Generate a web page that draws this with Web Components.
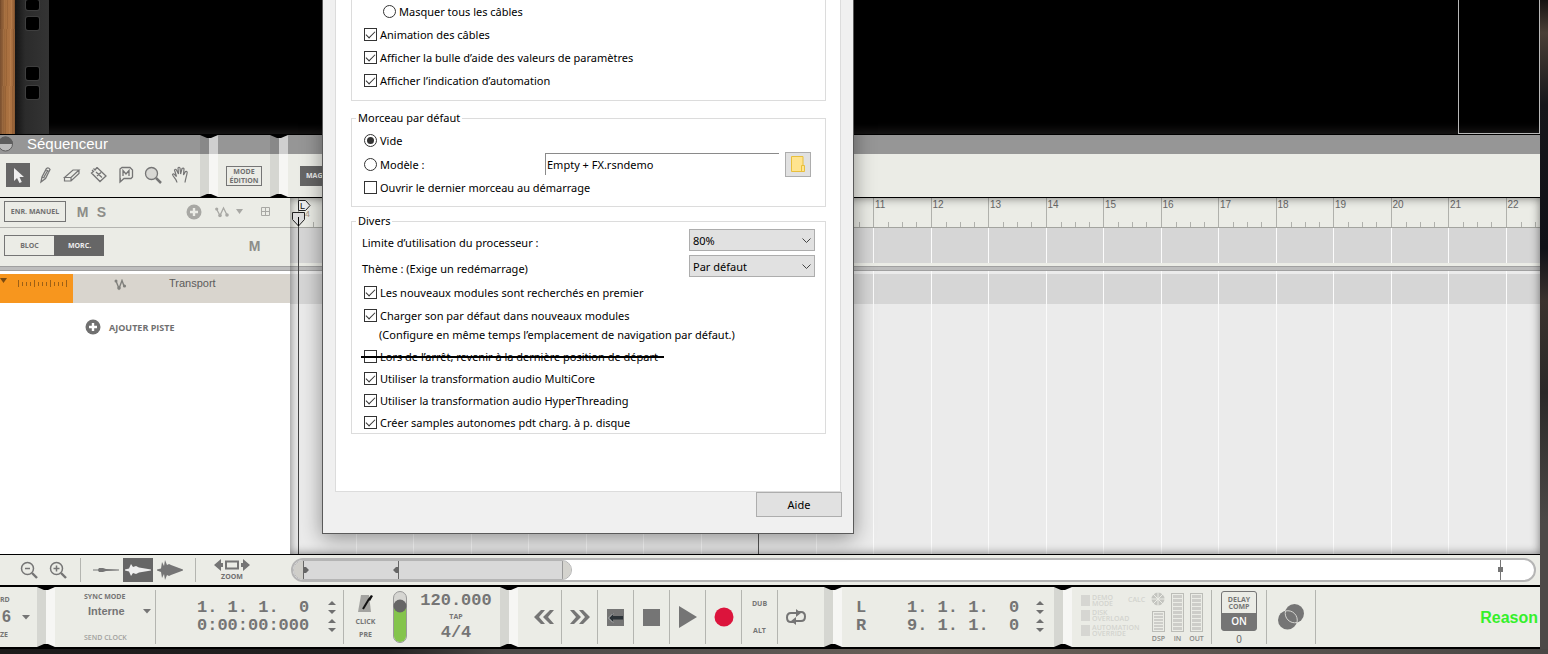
<!DOCTYPE html>
<html lang="fr">
<head>
<meta charset="utf-8">
<title>Séquenceur</title>
<style>
html,body{margin:0;height:100%}
body{font-family:"Liberation Sans",Arial,sans-serif;overflow:hidden;
background:linear-gradient(180deg,#151412 0,#4a3f36 5%,#16161a 16%,#101117 38%,#3b322e 46%,#2b2928 60%,#4c4947 80%,#4c4947 100%)}
</style>
</head>
<body>
<studio-app></studio-app>
<script>
function define(name, html, setup){
  const t=document.createElement('template');
  t.innerHTML='<style>*{box-sizing:border-box}button{font:inherit;color:inherit;background:none;border:0;padding:0;margin:0}svg{display:block}</style>'+html;
  customElements.define(name,class extends HTMLElement{
    constructor(){super();this.attachShadow({mode:'open'});}
    connectedCallback(){
      if(this.ready)return;this.ready=true;
      this.shadowRoot.append(t.content.cloneNode(true));
      if(setup)setup(this,this.shadowRoot);
    }
  });
}

/* ---------- rack ---------- */
define('rack-view',`
<style>
:host{display:flex;flex:0 0 134px;background:#000;box-shadow:inset 0 -10px 8px -6px #1a1818;overflow:hidden}
.wood{width:15px;background:
 repeating-linear-gradient(91deg,rgba(70,30,5,.14) 0 1px,transparent 1px 4px,rgba(255,200,140,.1) 4px 5px,transparent 5px 7px),
 linear-gradient(90deg,#7a5030,#a8703f 40%,#ad7343 75%,#8a5a33)}
.rail{width:34px;background:linear-gradient(90deg,#141414,#2b2b2b 30%,#343434);padding:0 0 0 11px;display:flex;flex-direction:column}
i{display:block;width:13px;height:13px;background:#000;border-radius:2px;box-shadow:0 0 0 1px #3e3e3e;margin-bottom:6px;flex:none}
i:first-child{height:10px}
i:nth-child(1){margin-bottom:7px}
i:nth-child(2){margin-bottom:37px}
.room{flex:1}
.map{width:82px;border:1px solid #b8b8b8;border-top:0;height:134px}
</style>
<div class="wood"></div><div class="rail"><i></i><i></i><i></i><i></i></div><div class="room"></div><div class="map"></div>`);

/* ---------- fold between panels ---------- */
define('panel-fold',`
<style>
:host{display:flex;flex:0 0 18px;position:relative}
.d{flex:1;background:rgba(0,0,0,.09)}.l{flex:1;background:rgba(255,255,255,.55)}
svg{position:absolute;left:0;width:18px;height:4px}.t{top:0}.b{bottom:0}
</style>
<div class="d"></div><div class="l"></div>
<svg class="t" viewBox="0 0 18 4"><path d="M0 0H18L11 3H7Z"/></svg>
<svg class="b" viewBox="0 0 18 4"><path d="M0 4H18L11 1H7Z"/></svg>`);

/* ---------- sequencer header ---------- */
define('sequencer-header',`
<style>
:host{display:flex;flex:0 0 64px;border-top:1px solid #000;border-bottom:1px solid #000;background:linear-gradient(#969696 19px,#ebece6 19px);color:#707070;overflow:hidden}
.main{width:200px}
.title{height:19px;display:flex;align-items:center;color:#fff;font-size:15px;gap:14px;padding-bottom:2px}
.title svg{flex:none}
.tools{display:flex;gap:3px;padding:9px 0 0 6px}
.tools button{width:24px;height:24px;display:grid;place-items:center}
.tools .on{background:#666}
.seg{padding-top:19px;display:flex;justify-content:center;align-items:center}
.mode{width:52px}
.mode button{font:bold 7px/9px "Open Sans",sans-serif;border:1px solid #757575;width:36px;height:20px}
.rest{flex:1;justify-content:flex-start;padding-left:12px}
.rest button{background:#666;color:#eee;font:bold 7px "Open Sans",sans-serif;height:20px;width:34px;padding-left:6px;text-align:left}
</style>
<div class="main">
 <div class="title"><svg width="13" height="16" viewBox="0 0 13 16"><circle cx="5.500" cy="8" r="7" fill="#bdbdbd" stroke="#5e5e5e"/><path d="M-2 8a7 7 0 0 1 15 0z" fill="#5e5e5e"/></svg><span>Séquenceur</span></div>
 <div class="tools">
  <button class="on" aria-label="Sélection"><svg width="24" height="24"><path d="M8 5v13l3-3 2.500 5 2.300-1-2.300-5H18z" fill="#eee"/></svg></button>
  <button aria-label="Crayon"><svg width="24" height="24" fill="none" stroke="#757575" stroke-width="1.300"><path d="M8 19l1-5L13.500 5.500q2-1.500 3.500 1L12.500 15.500zM9 14l3.500 1.500M12.500 7.500l3.500 1.500M11 14l4-7"/></svg></button>
  <button aria-label="Gomme"><svg width="24" height="24" fill="none" stroke="#757575" stroke-width="1.200"><path d="M4.500 14.500L13 7h6L11 14.500zM4.500 14.500V18H11L19 10.500V7M11 14.500V18"/></svg></button>
  <button aria-label="Rasoir"><svg width="24" height="24" fill="none" stroke="#757575" stroke-width="1.300"><path d="M10 4.500L19 13l-6 5.500L4.500 10l2-1.500L5 7M10 4.500L8 7 6.500 5.500M9 9l6 5.500M10 13l4-3.500"/></svg></button>
  <button aria-label="Muet"><svg width="24" height="24" fill="none" stroke="#757575" stroke-width="1.300"><path d="M7 16H6V6L8 4.500h8L18.500 7v7L17 15.500H10L6 19V15M9 13V7.500L12 11l3-3.500V13"/></svg></button>
  <button aria-label="Loupe"><svg width="24" height="24" fill="none" stroke="#757575"><circle cx="10.500" cy="10.500" r="6" fill="#d8d8d4" stroke-width="1.300"/><path d="M15 15l5 5" stroke-width="2.500"/></svg></button>
  <button aria-label="Main"><svg width="24" height="24" fill="none" stroke="#757575" stroke-width="1.200"><path d="M9 19.500C8.500 16 5 14 4.500 11.500q1-1.500 2.500.5l1.500 1.500L6.500 7q1-1.500 2 0L10.500 11 10 5q1-1.500 2 0l.6 6L14 5.500q1.300-1 2 .3L15.500 12l2-3.500q1.500-.5 1.700 1C18.500 13.500 17.500 16 17 19.500"/></svg></button>
 </div>
</div>
<panel-fold></panel-fold>
<div class="seg mode"><button>MODE ÉDITION</button></div>
<panel-fold></panel-fold>
<div class="seg rest"><button>MAG</button></div>`);

/* ---------- track list ---------- */
define('track-list',`
<style>
:host{display:flex;flex-direction:column;width:290px;flex:none;background:#fff;color:#8d8d89;font-family:"Open Sans",sans-serif}
.row{display:flex;align-items:center;background:#ebece6}
.top{height:30px;border-bottom:1px solid #b4b4b0;padding:0 0 2px 4px}
.box{border:1px solid #757575;color:#707070;font-size:7px;font-weight:700;height:21px;width:62px}
.ms{font:bold 14px "Liberation Sans",sans-serif;width:19px;text-align:center}
.rec{margin-right:7px}
.icons{display:flex;align-items:center;margin-left:auto;padding-right:19px}
.icons svg:nth-child(2){margin-left:13px}.icons svg:nth-child(3){margin:0 18px 0 7px}
.second{height:38px;padding:0 0 3px 4px}
.second .box{width:50px;border-right:0}.second .sel{background:#666;border-color:#666;color:#eee}
.second .ms{margin-left:auto;margin-right:26px}
.gap{height:5px;background:#bdbdbd;border-top:1px solid #a0a0a0;border-bottom:1px solid #a0a0a0;margin-bottom:3px;flex:none}
.track{height:29px;background:#d9d5ce;color:#5c5c5c;font:11px "Liberation Sans",sans-serif;align-items:flex-start}
.clip{width:73px;height:29px;background:#f7961e}
.track .node{margin:5px 0 0 41px}.track span{margin:3px 0 0 42px}
.add{display:flex;align-items:center;gap:8px;margin:16px 0 0 85px;color:#707070;font-size:9px;font-weight:700;height:16px}
</style>
<div class="row top"><button class="box rec">ENR. MANUEL</button><button class="ms">M</button><button class="ms">S</button>
 <div class="icons">
 <svg width="16" height="16"><circle cx="8" cy="8" r="7.500" fill="#a8a8a4"/><path d="M8 4v8M4 8h8" stroke="#ebece6" stroke-width="2.400"/></svg>
 <svg width="14" height="12" fill="none" stroke="#a8a8a4" stroke-width="1.300"><path d="M1.500 3L5 9.500 8.500 2 12 9"/><g fill="#a8a8a4" stroke="none"><circle cx="1.700" cy="3" r="1.600"/><circle cx="5" cy="9.500" r="1.800"/><circle cx="12" cy="9" r="1.800"/></g></svg>
 <svg width="7" height="6"><path d="M0 0h7L3.500 5z" fill="#a8a8a4"/></svg>
 <svg width="10" height="10" fill="none" stroke="#a8a8a4"><path d="M.5.5h8v8h-8zM4.500 0v9M0 4.500h9"/></svg>
 </div></div>
<div class="row second"><button class="box">BLOC</button><button class="box sel">MORC.</button><button class="ms">M</button></div>
<div class="gap"></div>
<div class="row track"><svg class="clip" viewBox="0 0 73 29"><path d="M0 4h7L3.500 9z" fill="#7a4a10"/><path d="M18.500 6v7M34.500 6v7M50.500 6v7M66.500 6v7M22.500 8v4M26.500 8v4M30.500 8v4M38.500 8v4M42.500 8v4M46.500 8v4M54.500 8v4M58.500 8v4M62.500 8v4" stroke="#9d6016"/></svg>
 <svg class="node" width="13" height="12" fill="none" stroke="#80807c" stroke-width="1.400"><path d="M2 2L5 9.500 8 1.500 10 7"/><g fill="#80807c" stroke="none"><circle cx="2" cy="2" r="1.500"/><circle cx="5" cy="9" r="1.800"/><circle cx="10.500" cy="7" r="1.600"/></g></svg><span>Transport</span></div>
<button class="add"><svg width="16" height="16"><circle cx="8" cy="8" r="7.500" fill="#707070"/><path d="M8 4v8M4 8h8" stroke="#fff" stroke-width="2.400"/></svg>AJOUTER PISTE</button>`);

/* ---------- bars of the time line; 21.6 bars fit the width ---------- */
define('bar-grid',`
<style>
:host{display:grid;grid-template-columns:repeat(22,calc(100% / 21.6));padding-left:8px;overflow:hidden;flex:none}
div{border-left:1px solid #fbfbfb}
:host([ruler]) div{border-color:#b0b1ac;display:grid;grid-template-columns:repeat(4,1fr);grid-template-rows:1fr 5px;font:10px/13px "Liberation Sans",sans-serif;color:#696969}
span{grid-column:1/-1;padding-left:1px}
i{border-left:1px solid #b0b1ac}i.f{border:0}
</style>`,(el,root)=>{
  const from=+el.getAttribute('first')||0;
  for(let n=1;n<=22;n++){
    const d=document.createElement('div');
    if(el.hasAttribute('ruler'))d.innerHTML='<span>'+(n>=from?n:'')+'</span><i class="f"></i><i></i><i></i><i></i>';
    root.append(d);
  }
});

define('time-line',`
<style>
:host{display:flex;flex-direction:column;flex:1;min-width:0;position:relative;background:#ebebeb;overflow:hidden}
.r{height:30px;background:#ebece6;border-bottom:1px solid #a3a49f}
.a{height:35px;background:#d6d6d6}
.s{height:3px;background:#ebece6}
.gap{height:5px;flex:none;background:#bdbdbd;border-top:1px solid #a0a0a0;border-bottom:1px solid #a0a0a0}
.b{height:3px}.c{height:30px;background:#d6d6d6}.d{flex:1}
.shade{position:absolute;inset:0;box-shadow:inset 0 0 10px rgba(0,0,0,.5)}
.end{position:absolute;left:468px;top:30px;bottom:0;border-left:1px solid #555}
.head{position:absolute;left:8px;top:14px;bottom:0;border-left:1px solid #444}
.mark{position:absolute;left:0;top:0}
</style>
<bar-grid class="r" ruler first="11"></bar-grid>
<bar-grid class="a"></bar-grid><div class="s"></div><div class="gap"></div>
<bar-grid class="b"></bar-grid><bar-grid class="c"></bar-grid><bar-grid class="d"></bar-grid>
<div class="end"></div><div class="head"></div><div class="shade"></div>
<svg class="mark" width="32" height="32" font-family="Liberation Sans" ><text x="15" y="19" font-size="9" fill="#a89888">4</text><path d="M8.500 2.500h7l4.500 5-4.500 5h-7z" fill="#eee" stroke="#222"/><text x="10" y="11" font-size="9" fill="#111">L</text><path d="M2.500 14.500h12v7L8.500 28l-6-6.500z" fill="#dcdcdc" stroke="#222"/><path d="M8.500 19v9" stroke="#000"/></svg>`);

/* ---------- zoom and scroll strip ---------- */
define('zoom-strip',`
<style>
:host{display:flex;flex:0 0 31px;align-items:center;border-top:1px solid #000;background:#ebece6;color:#707070}
.l{width:291px;display:flex;align-items:center;flex:none;height:24px}
button{display:grid;place-items:center;height:24px}
.z{width:29px}.z:first-child{margin-left:14px}
.v{width:30px;margin-right:2px}.on{background:#666}
hr{border:0;width:1px;height:24px;background:#b4b5b0;margin:0 10px 0 8px}
.v+hr{margin:0 18px 0 8px}
.zoom{width:36px;font:bold 7px/8px "Open Sans",sans-serif;align-content:center;gap:2px}
.bar{flex:1;margin-right:4px;height:24px;border:2px solid #b5b5b5;border-radius:12px;background:#fff;display:flex;overflow:hidden}
.thumb{width:279px;height:20px;background:#d9d9d9;border:1px solid #b5b5b5;border-radius:10px;overflow:hidden}
.sp{flex:1}.end{margin-right:30px}
</style>
<div class="l">
<button class="z" aria-label="Zoom arrière"><svg width="18" height="18" fill="none" stroke="#757575" stroke-width="1.500"><circle cx="7.500" cy="7.500" r="6"/><path d="M5 7.500h5"/><path d="M12 12l5 5" stroke-width="2.400"/></svg></button>
<button class="z" aria-label="Zoom avant"><svg width="18" height="18" fill="none" stroke="#757575" stroke-width="1.500"><circle cx="7.500" cy="7.500" r="6"/><path d="M4.500 7.500h6M7.500 4.500v6"/><path d="M12 12l5 5" stroke-width="2.400"/></svg></button>
<hr>
<button class="v" aria-label="Petite onde"><svg width="26" height="16" fill="#757575"><path d="M0 7.500h5l1-1.500h4l3 1 13 .5v1L13 9l-3 1H6L5 8.500H0z"/></svg></button>
<button class="v on" aria-label="Onde moyenne"><svg width="26" height="16" fill="#eee"><path d="M0 7.500L4 6.500 6 2l2 3 3-1 3 1.500 12 2v1L14 10.500l-3 1.500-3-1-2 3-2-4.500-4-1z"/></svg></button>
<button class="v" aria-label="Grande onde"><svg width="26" height="20" fill="#757575"><path d="M0 9.500l4-1L5 2l2 4 1-6 2 5 2-1 2 1 12 4.500v1L14 15l-2 1-2-1-2 5-1-6-2 4-1-6-4-1.500z"/></svg></button>
<hr>
<button class="zoom"><svg width="36" height="12" fill="#757575"><path d="M0 6l7-6v4h2v4H7v4zM36 6l-7-6v4h-2v4h2v4z"/><path d="M12 2.500h12v7H12z" fill="none" stroke="#757575" stroke-width="2"/></svg>ZOOM</button>
</div>
<div class="bar"><svg class="thumb" viewBox="1 1 277 18"><path d="M0 0h10v20H0z" fill="#cfcec9"/><path d="M10.500 0v20M105.500 0v20" stroke="#666"/><path d="M11 7h2l3 3-3 3h-2zM105 7h-2l-3 3 3 3h2z" fill="#666"/><path d="M269 0h11v20h-11z" fill="#d4d3ce"/><path d="M269.500 0v20" stroke="#999"/></svg>
<span class="sp"></span><svg class="end" width="7" height="20"><path d="M3.500 0v20" stroke="#757575"/><path d="M1 7h5v5H1z" fill="#757575"/></svg></div>`);

/* ---------- transport ---------- */
define('step-arrows',`<style>:host{display:grid;gap:5px}</style>
<svg width="8" height="13" fill="#707070"><path d="M4 0l4 4H0zM0 9h8l-4 4z"/></svg><svg width="8" height="13" fill="#707070"><path d="M4 0l4 4H0zM0 9h8l-4 4z"/></svg>`);

define('level-meter',`
<style>:host{display:flex;flex-direction:column;align-items:center;justify-content:flex-end;gap:2px;width:19px;height:51px;font:600 7px/9px "Open Sans",sans-serif;color:#8a8a86}
div{width:13px;height:39px;border:1px solid #bcbdb8;padding:1px;background:repeating-linear-gradient(#cdcdc9 0 3px,#ebece6 3px 4px) content-box}
:host([small]) div{height:21px;background:repeating-linear-gradient(#cdcdc9 0 2px,#ebece6 2px 3px) content-box}</style>
<div></div><slot></slot>`);

define('transport-bar',`
<style>
:host{display:flex;flex:0 0 64px;border-top:2px solid #000;border-bottom:2px solid #000;background:#ebece6;color:#757575;overflow:hidden}
.seg{display:flex;align-items:stretch;flex:none}
small{font:bold 7px/9px "Open Sans",sans-serif;display:block}
.col{display:flex;flex-direction:column}
hr{border:0;width:1px;margin:3px 0;background:#b4b5b0;flex:none}
.num{font:bold 17px/18px "Liberation Mono",monospace;white-space:pre}
.a{width:37px;overflow:hidden;position:relative}
.a .col{padding-top:8px}
.big{font-weight:bold;font-size:16px;line-height:26px;padding-left:2px}
.a svg{margin:28px 7px 0 auto}
.sync{width:100px;padding:5px 4px 0 29px}
.sync .pick{display:flex;justify-content:space-between;align-items:center;font:bold 11px/20px "Liberation Sans",sans-serif;padding-left:4px}
.sync .off{margin-top:12px;color:#a2a29e;font-weight:600}
.time{width:187px;padding-left:41px;display:flex;align-items:center;gap:19px;padding-bottom:1px}
.click{width:43px;align-items:center;padding-top:8px;gap:4px}
.slide{width:14px;height:52px;margin:4px 12px 0 6px}
.tempo{width:74px;align-items:center;padding-top:5px}
.tempo small{line-height:14px}
.keys{width:306px;padding-left:8px}
.keys button{width:35px;display:grid;place-items:center}
.keys .alt{align-content:space-between;padding:12px 0 12px}
.loop{width:212px;padding-left:14px;align-items:center;gap:17px;display:flex;padding-bottom:1px}
.e{flex:1;min-width:0}
.warn{width:73px;padding:8px 0 0 9px;gap:3px;color:#d3d4cf;flex:none}
.warn div{display:flex;gap:2px}
.warn i{width:9px;height:11px;background:#d6d6d2;flex:none}
.warn small{font:600 7px/6px "Open Sans",sans-serif;white-space:nowrap}
.calc{width:0;color:#d3d4cf}
.calc small{width:20px;margin:8px 0 0 -17px;font-weight:600}
.dsp{position:relative;width:19px;margin-left:4px}
.dsp svg{position:absolute;left:2px;top:5px}
level-meter{margin-top:5px}
.meters{display:flex;width:139px;flex:none}
.delay{width:54px;align-items:center;padding-top:4px;font:10px/13px "Liberation Sans",sans-serif;color:#666}
.delay button{width:36px;height:40px;border:1px solid #757575;border-radius:3px;background:#757575;overflow:hidden;margin-bottom:2px}
.delay button span{display:block;background:#ebece6;color:#757575;font:700 7px/7px "Open Sans",sans-serif;height:21px;padding-top:4px}
.delay button b{display:block;color:#fff;font:600 10px/17px "Open Sans",sans-serif}
.blend{width:48px;display:grid;place-items:center}
.brand{margin-left:auto;color:#35f02b;font-weight:bold;font-size:16px;align-self:center;margin-right:2px;padding-top:2px}
</style>
<div class="seg a"><div class="col"><small>RD</small><span class="big">6</span><small>ZE</small></div><svg width="8" height="5"><path d="M0 0h8L4 4.500z" fill="#757575"/></svg></div>
<panel-fold></panel-fold>
<div class="seg">
 <div class="col sync"><small>SYNC MODE</small><div class="pick">Interne<svg width="8" height="5"><path d="M0 0h8L4 4.500z" fill="#757575"/></svg></div><small class="off">SEND CLOCK</small></div><hr>
 <div class="time"><div class="num">1. 1. 1.  0
0:00:00:000</div><step-arrows></step-arrows></div><hr>
 <div class="col click"><svg width="15" height="18" viewBox="0 0 15 18"><path d="M3 0h8l2 17H0z" fill="#a3a3a0"/><path d="M5 14L11 4" stroke="#111" stroke-width="2"/><path d="M10 4l3-4 2 1-3 5z" fill="#111"/></svg><small>CLICK</small><small>PRE</small></div>
 <svg class="slide" viewBox="0 0 14 52"><rect x=".500" y=".500" width="13" height="51" rx="6.500" fill="#d6d6d2" stroke="#999"/><path d="M1 15h12v30a6 6 0 0 1-12 0z" fill="#84c44c"/><circle cx="7" cy="15" r="6.500" fill="#666"/></svg>
 <div class="col tempo"><span class="num">120.000</span><small>TAP</small><span class="num">4/4</span></div><span style="width:7px"></span>
</div>
<panel-fold></panel-fold>
<div class="seg keys">
 <button aria-label="Reculer"><svg width="20" height="14" fill="#757575"><path d="M7 0h4L5 7l6 7H7L0 7zM16 0h4l-6 7 6 7h-4L9 7z"/></svg></button><hr>
 <button aria-label="Avancer"><svg width="20" height="14" fill="#757575"><path d="M0 0h4l7 7-7 7H0l6-7zM9 0h4l7 7-7 7H9l6-7z"/></svg></button><hr>
 <button aria-label="Début"><svg width="17" height="17"><path d="M0 0h17v17H0z" fill="#757575"/><path d="M1 9l5-5v3h10v3.500H6v3z" fill="#2b3237"/><path d="M1.500 9L6 4.500M1.500 9L6 13.500" stroke="#ccc"/></svg></button><hr>
 <button aria-label="Stop"><svg width="17" height="17"><path d="M0 0h17v17H0z" fill="#757575"/></svg></button><hr>
 <button aria-label="Lecture"><svg width="18" height="22"><path d="M0 0l18 11L0 22z" fill="#757575"/></svg></button><hr>
 <button aria-label="Enregistrer"><svg width="20" height="20"><circle cx="10" cy="10" r="9.500" fill="#dc143c"/></svg></button><hr>
 <button class="alt"><small>DUB</small><small>ALT</small></button><hr>
 <button aria-label="Boucle"><svg width="22" height="16" fill="none" stroke="#757575" stroke-width="2"><path d="M10 13H6Q2 13 2 8.500T6 4h7M12 3h4q4 0 4 4.500T16 12H9"/><path d="M11 0l5 4-5 4zM11 8l-5 4 5 4z" fill="#757575" stroke="none"/></svg></button>
</div>
<panel-fold></panel-fold>
<div class="seg loop"><div class="num">L    1. 1. 1.  0
R    9. 1. 1.  0</div><step-arrows></step-arrows></div>
<panel-fold></panel-fold>
<div class="seg e">
 <div class="meters">
 <div class="col warn"><div><i></i><small>DEMO<br>MODE</small></div><div><i></i><small>DISK<br>OVERLOAD</small></div><div><i></i><small>AUTOMATION<br>OVERRIDE</small></div></div>
 <div class="calc"><small>CALC</small></div>
 <div class="dsp"><svg width="14" height="14"><circle cx="7" cy="7" r="6.500" fill="#c4c5c0"/><path d="M7 0v14M0 7h14M2 2l10 10M12 2L2 12" stroke="#ebece6"/></svg><level-meter small>DSP</level-meter></div>
 <level-meter>IN</level-meter><level-meter>OUT</level-meter></div><hr>
 <div class="col delay"><button><span>DELAY COMP</span><b>ON</b></button>0</div><hr>
 <div class="blend"><svg width="28" height="28"><circle cx="10.500" cy="17" r="9.500" fill="#757575"/><circle cx="17.500" cy="10.500" r="9.500" fill="#757575"/><path d="M8.500 8A9.500 9.500 0 0 1 20 19.500A9.500 9.500 0 0 1 8.500 8z" fill="none" stroke="#d6d6d2"/></svg></div><hr>
 <span class="brand">Reason</span>
</div>`);

/* ---------- preferences dialog ---------- */
const tick=`
<style>
:host{display:flex;align-items:center;height:22px}
label{display:flex;align-items:center;gap:3px;white-space:nowrap}
input{appearance:none;width:13px;height:13px;margin:0;border:1px solid #333;background:#fff;display:grid;place-items:center;flex:none}
input[type=radio]{border-radius:50%}
input[type=checkbox]:checked::before{content:"";width:8px;height:4px;border:solid #333;border-width:0 0 1px 1px;transform:translateY(-1px) rotate(-45deg)}
input[type=radio]:checked::before{content:"";width:7px;height:7px;border-radius:50%;background:#333}
</style>`;
function tickSetup(el,root){root.querySelector('input').checked=el.hasAttribute('checked');}
define('pref-check',tick+'<label><input type="checkbox"><slot></slot></label>',tickSetup);
define('pref-radio',tick+'<label><input type="radio"><slot></slot></label>',tickSetup);

define('pref-select',`
<style>
:host{display:flex;height:26px;align-items:center;justify-content:space-between;padding:0 10px 0 0}
div{position:relative;width:126px;margin-bottom:4px}
select{appearance:none;width:126px;height:22px;display:block;border:1px solid #adadad;background:#e1e1e1;font:inherit;color:#000;padding:0 3px;border-radius:0}
svg{position:absolute;right:4px;top:9px;pointer-events:none}
</style>
<label for="s"><slot></slot></label><div><select id="s"><option></option></select><svg width="9" height="6" fill="none" stroke="#444"><path d="M.5.500l4 4 4-4"/></svg></div>`,
(el,root)=>{root.querySelector('option').textContent=el.getAttribute('value');});

define('group-box',`
<style>
:host{display:block}
fieldset{margin:0;border:1px solid #dcdcdc;padding:0 0 0 10px;min-width:0}
legend{margin-left:-6px;padding:0 2px;height:16px;line-height:16px}
</style><fieldset><legend><slot name="title"></slot></legend><slot></slot></fieldset>`);

define('prefs-dialog',`
<style>
:host{display:block;width:532px;height:534px;border:1px solid #5a5a5a;border-top:0;background:#f0f0f0;box-sizing:border-box;box-shadow:0 4px 20px rgba(0,0,0,.4);font:11px/15px "Noto Sans","Open Sans",sans-serif;color:#000;padding:0 12px}
.page{height:492px;border:1px solid #dcdcdc;border-top:0;background:#fff;padding:0 14px 0 15px}
.first{border:1px solid #dcdcdc;border-top:0;height:101px;padding-left:10px;margin-bottom:9px}
.first pref-check,.first pref-radio{height:23px}
pref-check,pref-radio{padding-left:2px}
.first pref-radio{padding-left:21px}
.song{display:block;margin-bottom:6px}
.song .body{padding:2px 0 8px}
.song pref-radio{height:24px}
.row{display:flex;align-items:center;height:24px;padding-right:14px}
.row input{margin-left:auto;width:234px;height:22px;border:0;border-top:1px solid #8a8a8a;border-left:1px solid #8a8a8a;padding:0 1px;font:inherit;background:#fff}
.row button{width:26px;height:25px;border:1px solid #adadad;background:#e1e1e1;display:grid;place-items:center;margin-left:6px}
.wide{height:23px}
p{margin:0;height:18px;line-height:16px;padding-left:17px}
.struck{position:relative;display:block}
.struck::after{content:"";position:absolute;left:-1px;width:303px;top:11px;height:2px;background:#000}
.foot{display:flex;justify-content:flex-end;margin-right:-1px}
.foot button{width:86px;height:25px;border:1px solid #adadad;background:#e1e1e1}
</style>
<div class="page">
 <div class="first"><pref-radio>Masquer tous les câbles</pref-radio><pref-check checked>Animation des câbles</pref-check><pref-check checked>Afficher la bulle d’aide des valeurs de paramètres</pref-check><pref-check checked>Afficher l’indication d’automation</pref-check></div>
 <group-box class="song"><span slot="title">Morceau par défaut</span><div class="body">
  <pref-radio checked>Vide</pref-radio>
  <div class="row"><pref-radio>Modèle :</pref-radio><input aria-label="Modèle" value="Empty + FX.rsndemo"><button aria-label="Parcourir"><svg width="14" height="17"><path d="M.5.500h11.500v9h1.500v6H.5z" fill="#ffe48f" stroke="#e8bf3c"/><path d="M10.500 15V9.500H12" fill="none" stroke="#e8bf3c"/></svg></button></div>
  <pref-check>Ouvrir le dernier morceau au démarrage</pref-check></div>
 </group-box>
 <group-box><span slot="title">Divers</span>
  <pref-select value="80%">Limite d’utilisation du processeur :</pref-select>
  <pref-select value="Par défaut">Thème : (Exige un redémarrage)</pref-select>
  <pref-check class="wide" checked>Les nouveaux modules sont recherchés en premier</pref-check>
  <pref-check class="wide" checked>Charger son par défaut dans nouveaux modules</pref-check>
  <p>(Configure en même temps l’emplacement de navigation par défaut.)</p>
  <div class="struck"><pref-check>Lors de l’arrêt, revenir à la dernière position de départ</pref-check></div>
  <pref-check checked>Utiliser la transformation audio MultiCore</pref-check>
  <pref-check checked>Utiliser la transformation audio HyperThreading</pref-check>
  <pref-check checked>Créer samples autonomes pdt charg. à p. disque</pref-check>
 </group-box>
</div>
<div class="foot"><button>Aide</button></div>`);

define('studio-app',`
<style>
:host{display:flex;flex-direction:column;height:100vh;padding:0 8px 5px 0;box-sizing:border-box;position:relative}
.work{display:flex;flex:1;min-height:0}
prefs-dialog{position:absolute;left:322px;top:0}
.floor{position:absolute;left:0;right:0;bottom:0;height:5px;background:linear-gradient(90deg,#1c1a1a,#242222 25%,#4a4745 32%,#5c5753 50%,#6a6058 60%,#4a4745)}
</style>
<rack-view></rack-view><sequencer-header></sequencer-header>
<div class="work"><track-list></track-list><time-line></time-line></div>
<zoom-strip></zoom-strip><transport-bar></transport-bar><div class="floor"></div>
<prefs-dialog></prefs-dialog>`);
</script>
</body>
</html>
